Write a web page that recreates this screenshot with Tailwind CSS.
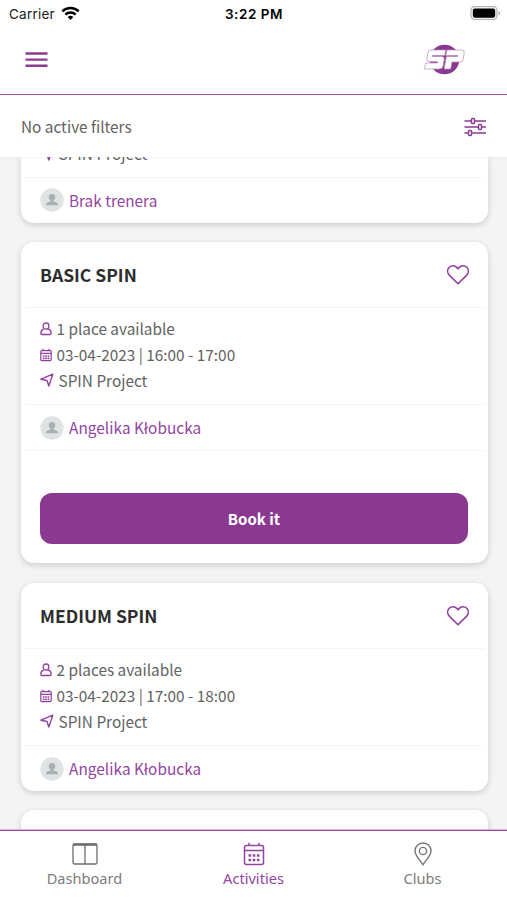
<!DOCTYPE html>
<html lang="en">
<head>
<meta charset="utf-8">
<meta name="viewport" content="width=device-width">
<title>Activities</title>
<script src="https://cdn.jsdelivr.net/npm/@tailwindcss/browser@4"></script>
</head>
<body class="bg-white">
<svg class="hidden">
  <symbol id="person" viewBox="0 0 12 14"><g fill="none" stroke="currentColor" stroke-width="1.300"><rect x="3.200" y="1" width="5.600" height="6.200" rx="2.700"/><path d="M3.800 7.200C1.600 7.700.8 9.200.8 11.200q0 1.300 1.200 1.300h8q1.200 0 1.200-1.300c0-2-.8-3.500-3-4"/></g></symbol>
  <symbol id="cal" viewBox="0 0 12 14"><path d="M1.800 2.600h8.400q1 0 1 1v8q0 1-1 1H1.800q-1 0-1-1v-8q0-1 1-1zM.8 5.300h10.400M3 .8v2M9 .8v2" fill="none" stroke="currentColor" stroke-width="1.200"/><path d="M2.800 8h6.500M2.800 10.400h6.500" stroke="currentColor" stroke-width="1.600" stroke-dasharray="1.700 .7"/></symbol>
  <symbol id="loc" viewBox="0 0 14 14"><path d="M.9 6.200 12.800 1.200 8.800 13 7 7.500z" fill="none" stroke="currentColor" stroke-width="1.400" stroke-linejoin="round"/></symbol>
  <symbol id="avatar" viewBox="0 0 24 24"><circle cx="12" cy="12" r="11.700" fill="#dfe3e4"/><circle cx="12" cy="9.200" r="3.200" fill="#a9b0b2"/><path d="M10.500 11h3v2.500c2.800.3 4.500 1.500 4.700 3.800H5.800c.2-2.300 1.900-3.500 4.700-3.800z" fill="#a9b0b2"/></symbol>
  <symbol id="heart" viewBox="0 0 24 22"><path d="M12 19.800 3.500 11.400C1.200 9 1 5.600 3.200 3.300c2.200-2.200 5.600-2 7.500.1L12 4.800l1.300-1.400c1.900-2.100 5.300-2.300 7.500-.1 2.200 2.300 2 5.700-.3 8.100z" fill="none" stroke="currentColor" stroke-width="1.600" stroke-linejoin="round"/></symbol>
</svg>
<div class="flex h-[900px] w-[507px] flex-col overflow-hidden bg-white font-['Noto_Sans_CJK_SC','Noto_Sans',sans-serif] text-[#626262]">
  <div class="grid h-[27px] shrink-0 grid-cols-3 items-center pt-px pr-[6px] pl-[9px] font-['Inter',sans-serif] text-[13.500px] text-[#202020]">
    <div class="flex items-center gap-[6px]"><span class="tracking-[0.230px]">Carrier</span>
      <svg class="-mt-px h-[15px] w-[19px]" viewBox="0 0 19 15" fill="none" stroke="#000" stroke-width="2.400"><path d="M1.300 5.300a11.800 11.800 0 0 1 16.400 0M4.300 8.600a7.500 7.500 0 0 1 10.400 0"/><path d="m9.500 14-2.800-2.900a4 4 0 0 1 5.600 0z" fill="#000" stroke="none"/></svg>
    </div>
    <span class="-ml-[2px] text-center font-semibold tracking-[0.550px] text-black">3:22 PM</span>
    <svg class="-mt-[2px] h-[14px] w-[31px] justify-self-end" viewBox="0 0 31 14"><rect x="1" y=".7" width="26" height="12.800" rx="3.800" fill="#fff" stroke="#b5b5b5" stroke-width="1.300"/><rect x="2.800" y="2.400" width="22.400" height="9.300" rx="2" fill="#000"/><path d="M28.600 5v4.300q1.500-.7 1.500-2.150T28.600 5z" fill="#aaa"/></svg>
  </div>
  <header class="flex h-[68px] shrink-0 items-center justify-between border-b-[1.500px] border-[#a44fa8] pr-[42px] pb-[2px] pl-[25px] shadow-[0_1px_0_#e6cde7]">
    <svg class="h-[18px] w-[23px]" viewBox="0 0 23 18"><path d="M.5 2.500h22M.5 8.600h22M.5 14.700h22" stroke="#8a3a90" stroke-width="2.400"/></svg>
    <svg class="h-[32px] w-[42px]" viewBox="0 0 42 32"><circle cx="21.500" cy="15.500" r="14.800" fill="#8a3890"/>
      <g stroke="#b48ab7" stroke-width=".7" fill="#fff" stroke-linejoin="round"><path d="M8 6h14.700l-1 5.500H9.400l-.2.900h9.500q3 0 2.500 3l-1.200 6.600q-.6 3-3.500 3H1.600l1-6h11.800l.3-1.300H6.500q-3 0-2.500-3L4.800 9q.6-3 3.200-3z"/><path d="M23.800 6H38.500q3.200 0 2.700 3L40.300 15q-.5 3-3.500 3H29l-1.300 7h-6.600l2.300-12.500h11.200l.2-1H22.800z"/></g>
    </svg>
  </header>
  <div class="z-10 flex h-[62px] shrink-0 items-center justify-between bg-white pr-5 pl-[21px] shadow-[0_1px_2px_#0000000d]">
    <span class="mt-[2px] text-[15.350px]">No active filters</span>
    <svg class="mt-[2px] h-[22px] w-[24px] text-[#8a3a90]" viewBox="0 0 24 22" fill="none" stroke="currentColor" stroke-width="1.500"><path d="M1.500 5h7M11.500 5h11.500M1.500 11h14M18.500 11H23M1.500 17h4M8.500 17H23"/><rect x="8.500" y="2.500" width="3" height="5" rx="1"/><rect x="15.500" y="8.500" width="3" height="5" rx="1"/><rect x="5.500" y="14.500" width="3" height="5" rx="1"/></svg>
  </div>
  <main class="flex min-h-0 flex-1 flex-col gap-[19.500px] overflow-hidden bg-[#f4f4f4] pr-[19.500px] pl-[20.500px] text-[15.350px]">
    <article class="shrink-0 rounded-b-[13px] bg-white shadow-[0_2px_6px_#0000002b]">
      <div class="-mt-4 flex h-[36px] items-start px-[19px]"><div class="flex h-[26px] items-center"><svg class="mr-[5px] h-[14px] w-[14px] text-[#9140a0]"><use href="#loc"/></svg>SPIN Project</div></div>
      <div class="mx-1 flex h-[45.500px] items-center gap-[5.500px] border-t border-[#f5f5f5] px-[15px] text-[#9345a1]"><svg class="h-6 w-6"><use href="#avatar"/></svg><span>Brak trenera</span></div>
    </article>
    <article class="shrink-0 rounded-[13px] bg-white shadow-[0_2px_6px_#0000002b]">
      <div class="flex h-[65px] items-center justify-between px-[19.500px] pt-[1px]"><h2 class="text-[17.500px] font-bold text-[#2d2d2d]">BASIC SPIN</h2><svg class="-mr-[1.500px] h-[22px] w-6 text-[#9140a0]"><use href="#heart"/></svg></div>
      <div class="mx-1 flex h-[97px] flex-col border-t border-[#f5f5f5] px-[15px] pt-[8.400px] leading-[25.600px]">
        <div class="flex items-center gap-[5px]"><svg class="h-[14px] w-[12px] text-[#9140a0]"><use href="#person"/></svg><span>1 place available</span></div>
        <div class="flex items-center gap-[5px]"><svg class="h-[14px] w-[12px] text-[#9140a0]"><use href="#cal"/></svg><span>03-04-2023 | 16:00 - 17:00</span></div>
        <div class="flex items-center gap-[5px]"><svg class="h-[14px] w-[14px] text-[#9140a0]"><use href="#loc"/></svg><span>SPIN Project</span></div>
      </div>
      <div class="mx-1 flex h-[47px] items-center gap-[5.500px] border-y border-[#f5f5f5] px-[15px] text-[#9345a1]"><svg class="h-6 w-6"><use href="#avatar"/></svg><span class="tracking-[0.060px]">Angelika Kłobucka</span></div>
      <div class="px-[19.500px] pt-[41.500px] pb-[19.500px]"><button class="block h-[51px] w-full rounded-[12px] bg-[#8a3890] pt-[2px] text-[15px] font-bold text-white">Book it</button></div>
    </article>
    <article class="shrink-0 rounded-[13px] bg-white shadow-[0_2px_6px_#0000002b]">
      <div class="flex h-[65px] items-center justify-between px-[19.500px] pt-[2px]"><h2 class="text-[17.500px] font-bold text-[#2d2d2d]">MEDIUM SPIN</h2><svg class="-mr-[1.500px] h-[22px] w-6 text-[#9140a0]"><use href="#heart"/></svg></div>
      <div class="mx-1 flex h-[97px] flex-col border-t border-[#f5f5f5] px-[15px] pt-[8.900px] leading-[25.600px]">
        <div class="flex items-center gap-[5px]"><svg class="h-[14px] w-[12px] text-[#9140a0]"><use href="#person"/></svg><span>2 places available</span></div>
        <div class="flex items-center gap-[5px]"><svg class="h-[14px] w-[12px] text-[#9140a0]"><use href="#cal"/></svg><span>03-04-2023 | 17:00 - 18:00</span></div>
        <div class="flex items-center gap-[5px]"><svg class="h-[14px] w-[14px] text-[#9140a0]"><use href="#loc"/></svg><span>SPIN Project</span></div>
      </div>
      <div class="mx-1 flex h-[46px] items-center gap-[5.500px] border-t border-[#f5f5f5] px-[15px] pt-px text-[#9345a1]"><svg class="h-6 w-6"><use href="#avatar"/></svg><span class="tracking-[0.060px]">Angelika Kłobucka</span></div>
    </article>
    <article class="h-16 shrink-0 rounded-[13px] bg-white shadow-[0_2px_6px_#0000002b]"></article>
  </main>
  <nav class="grid h-[70px] shrink-0 grid-cols-3 border-t-[1.500px] border-[#9a4ba0] bg-white font-['Noto_Sans',sans-serif] text-[14.600px] text-[#7c7c7c] shadow-[0_-1px_0_#d9b5dc]">
    <div class="flex flex-col items-center pt-[11px]"><svg class="h-6 w-[26px]" viewBox="0 0 26 24" fill="none" stroke="#6d6d6d" stroke-width="1.300"><rect x="1" y="2" width="24" height="20" rx="1.500"/><path d="M13 2v20"/><path d="M1 2.700h24" stroke-width="2.200"/></svg><span class="leading-6">Dashboard</span></div>
    <div class="flex flex-col items-center pt-[11px] text-[#9345a1]"><svg class="h-6 w-[22px]" viewBox="0 0 22 24" fill="none" stroke="currentColor" stroke-width="1.500"><rect x="1.500" y="3.500" width="19" height="19" rx="2"/><path d="M1.500 8.500h19M6 .8v2.700M16 .8v2.700"/><path d="M5.500 13.500h11M5.500 18h11" stroke-width="2.600" stroke-dasharray="2.600 1.600"/></svg><span class="leading-6">Activities</span></div>
    <div class="flex flex-col items-center pt-[11px]"><svg class="h-6 w-5" viewBox="0 0 20 24" fill="none" stroke="#777" stroke-width="1.400"><path d="M10 22.700C7.500 18.500 2 14 2 9a8 8 0 0 1 16 0c0 5-5.500 9.500-8 13.700z"/><circle cx="10" cy="9" r="3.600"/></svg><span class="leading-6">Clubs</span></div>
  </nav>
</div>
</body>
</html>
